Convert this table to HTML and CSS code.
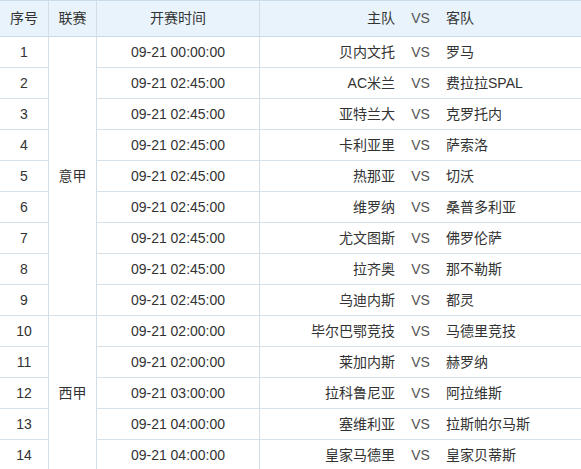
FILE: index.html
```html
<!DOCTYPE html>
<html lang="zh">
<head>
<meta charset="utf-8">
<link rel="stylesheet" href="styles.css">
</head>
<body>
<table class="sched">
  <colgroup>
    <col class="c-no"><col class="c-lg"><col class="c-time"><col class="c-home"><col class="c-vs"><col class="c-away">
  </colgroup>
  <thead>
    <tr><th class="bd">序号</th><th class="bd">联赛</th><th class="bd">开赛时间</th><th class="home">主队</th><th class="vs">VS</th><th class="away">客队</th></tr>
  </thead>
  <tbody>
    <tr><td class="bd">1</td><td class="bd lg" rowspan="9">意甲</td><td class="bd">09-21 00:00:00</td><td class="home">贝内文托</td><td class="vs">VS</td><td class="away">罗马</td></tr>
    <tr><td class="bd">2</td><td class="bd">09-21 02:45:00</td><td class="home">AC米兰</td><td class="vs">VS</td><td class="away">费拉拉SPAL</td></tr>
    <tr><td class="bd">3</td><td class="bd">09-21 02:45:00</td><td class="home">亚特兰大</td><td class="vs">VS</td><td class="away">克罗托内</td></tr>
    <tr><td class="bd">4</td><td class="bd">09-21 02:45:00</td><td class="home">卡利亚里</td><td class="vs">VS</td><td class="away">萨索洛</td></tr>
    <tr><td class="bd">5</td><td class="bd">09-21 02:45:00</td><td class="home">热那亚</td><td class="vs">VS</td><td class="away">切沃</td></tr>
    <tr><td class="bd">6</td><td class="bd">09-21 02:45:00</td><td class="home">维罗纳</td><td class="vs">VS</td><td class="away">桑普多利亚</td></tr>
    <tr><td class="bd">7</td><td class="bd">09-21 02:45:00</td><td class="home">尤文图斯</td><td class="vs">VS</td><td class="away">佛罗伦萨</td></tr>
    <tr><td class="bd">8</td><td class="bd">09-21 02:45:00</td><td class="home">拉齐奥</td><td class="vs">VS</td><td class="away">那不勒斯</td></tr>
    <tr><td class="bd">9</td><td class="bd">09-21 02:45:00</td><td class="home">乌迪内斯</td><td class="vs">VS</td><td class="away">都灵</td></tr>
    <tr><td class="bd">10</td><td class="bd lg" rowspan="5">西甲</td><td class="bd">09-21 02:00:00</td><td class="home">毕尔巴鄂竞技</td><td class="vs">VS</td><td class="away">马德里竞技</td></tr>
    <tr><td class="bd">11</td><td class="bd">09-21 02:00:00</td><td class="home">莱加内斯</td><td class="vs">VS</td><td class="away">赫罗纳</td></tr>
    <tr><td class="bd">12</td><td class="bd">09-21 03:00:00</td><td class="home">拉科鲁尼亚</td><td class="vs">VS</td><td class="away">阿拉维斯</td></tr>
    <tr><td class="bd">13</td><td class="bd">09-21 04:00:00</td><td class="home">塞维利亚</td><td class="vs">VS</td><td class="away">拉斯帕尔马斯</td></tr>
    <tr><td class="bd">14</td><td class="bd">09-21 04:00:00</td><td class="home">皇家马德里</td><td class="vs">VS</td><td class="away">皇家贝蒂斯</td></tr>
  </tbody>
</table>
</body>
</html>
```
FILE: styles.css
```css
html, body {
  margin: 0;
  padding: 0;
  background: #fff;
}
.sched {
  width: 581px;
  border-collapse: separate;
  border-spacing: 0;
  table-layout: fixed;
  font-family: "Liberation Sans", "Noto Sans CJK SC", sans-serif;
  font-size: 14px;
  color: #333;
}
.c-no { width: 49px; }
.c-lg { width: 48px; }
.c-time { width: 163px; }
.c-home { width: 140px; }
.c-vs { width: 41px; }
.c-away { width: 140px; }
.sched th,
.sched td {
  padding: 0;
  text-align: center;
  font-weight: normal;
  white-space: nowrap;
  overflow: hidden;
}
.sched th {
  line-height: 35px;
  background: #e8f3fc;
  border-top: 1px solid #c9dbe8;
  border-bottom: 1px solid #c9dbe8;
}
.sched td {
  line-height: 30px;
  border-bottom: 1px solid #d6e1ea;
}
.sched .bd {
  border-right: 1px solid #d2dfe9;
}
.sched .lg {
  vertical-align: middle;
}
.sched .home {
  text-align: right;
  padding-right: 5px;
}
.sched .vs {
  color: #555;
}
.sched .away {
  text-align: left;
  padding-left: 5px;
}
```
